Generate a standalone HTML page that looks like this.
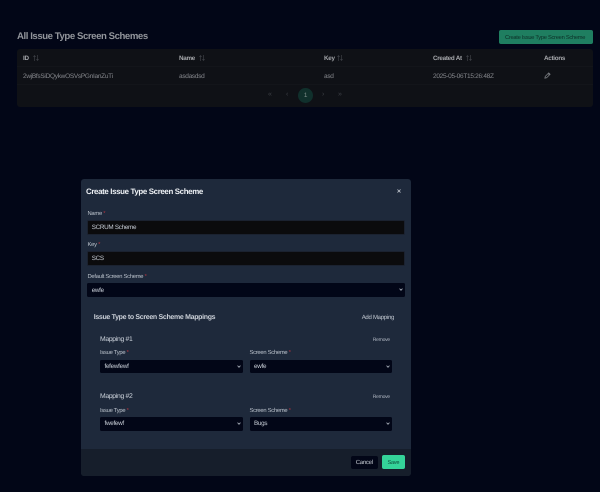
<!DOCTYPE html>
<html><head><meta charset="utf-8">
<style>
html,body{margin:0;padding:0;width:600px;height:492px;overflow:hidden;background:#020617}
body{position:relative;font-family:"Liberation Sans","Noto Sans CJK SC",sans-serif;text-rendering:geometricPrecision}
.a{position:absolute;white-space:nowrap;line-height:12px;letter-spacing:-.045em}
.b{position:absolute}
.th{font-size:6.3px;font-weight:700;color:#a6a8ac}
.td{font-size:6.5px;color:#85878c}
.so{position:absolute;top:55px}
.lb{font-size:5.8px;color:#b9c0ca}
.lb i{color:#b5343f;font-style:normal}
.inp{position:absolute;background:#0b0b0d;border:1px solid #1b2230;box-sizing:border-box;border-radius:1.5px}
.sel{position:absolute;background:#020617;box-sizing:border-box;border-radius:1.5px}
.sel svg{position:absolute;right:2px;top:5px}
.v{font-size:6.3px;color:#c8ced7}
.m{font-size:6.8px;color:#cdd3dc}
.r{font-size:5px;color:#aeb5c0}
.pg{font-size:7px;color:#3d4046}
</style></head><body>

<div class="a" style="left:17px;top:30.7px;font-size:9.6px;font-weight:700;color:#92959b">All Issue Type Screen Schemes</div>
<div class="b" style="left:499px;top:30px;width:94px;height:13.5px;background:#1f7e60;border-radius:2px"></div>
<div class="a" style="left:505px;top:31.5px;font-size:5.7px;color:#0c2f27">Create Issue Type Screen Scheme</div>

<div class="b" style="left:17px;top:49px;width:576px;height:57.5px;background:#0f1116;border-radius:3px"></div>
<div class="b" style="left:17px;top:66px;width:576px;height:1px;background:#13151a"></div>
<div class="b" style="left:17px;top:84px;width:576px;height:1px;background:#13151a"></div>

<div class="a th" style="left:23px;top:52.5px">ID</div>
<svg class="so" style="left:33px" width="6" height="6" viewBox="0 0 6 6" fill="none" stroke="#45484e" stroke-width=".6"><path d="M1.5 6V.6M.4 1.8 1.5.6 2.6 1.8M4.5 0V5.4M3.4 4.2 4.5 5.4 5.6 4.2"/></svg>
<div class="a th" style="left:179px;top:52.5px">Name</div>
<svg class="so" style="left:199px" width="6" height="6" viewBox="0 0 6 6" fill="none" stroke="#45484e" stroke-width=".6"><path d="M1.5 6V.6M.4 1.8 1.5.6 2.6 1.8M4.5 0V5.4M3.4 4.2 4.5 5.4 5.6 4.2"/></svg>
<div class="a th" style="left:324px;top:52.5px">Key</div>
<svg class="so" style="left:337px" width="6" height="6" viewBox="0 0 6 6" fill="none" stroke="#45484e" stroke-width=".6"><path d="M1.5 6V.6M.4 1.8 1.5.6 2.6 1.8M4.5 0V5.4M3.4 4.2 4.5 5.4 5.6 4.2"/></svg>
<div class="a th" style="left:433px;top:52.5px">Created At</div>
<svg class="so" style="left:466px" width="6" height="6" viewBox="0 0 6 6" fill="none" stroke="#45484e" stroke-width=".6"><path d="M1.5 6V.6M.4 1.8 1.5.6 2.6 1.8M4.5 0V5.4M3.4 4.2 4.5 5.4 5.6 4.2"/></svg>
<div class="a th" style="left:544px;top:52.5px">Actions</div>

<div class="a td" style="left:23px;top:70.5px">2wjBfsSiDQykwOSVsPGnIanZuTi</div>
<div class="a td" style="left:179px;top:70.5px">asdasdsd</div>
<div class="a td" style="left:324px;top:70.5px">asd</div>
<div class="a td" style="left:433px;top:70.5px">2025-05-06T15:26:48Z</div>
<svg class="b" style="left:544px;top:72px" width="7" height="7" viewBox="0 0 8 8" fill="none" stroke="#85888d" stroke-width=".8"><path d="M1 7 L1.4 5 L5.4 1 L7 2.6 L3 6.6 Z M4.7 1.8 L6.2 3.3"/></svg>

<div class="a pg" style="left:268px;top:89px">«</div>
<div class="a pg" style="left:286px;top:89px">‹</div>
<div class="b" style="left:298px;top:88px;width:15px;height:15px;border-radius:50%;background:#10302c"></div>
<div class="a" style="left:298px;width:15px;text-align:center;top:89.5px;font-size:6.4px;color:#80908c">1</div>
<div class="a pg" style="left:322px;top:89px">›</div>
<div class="a pg" style="left:338px;top:89px">»</div>

<!-- modal -->
<div class="b" style="left:81px;top:179px;width:330px;height:297px;background:#1e293b;border-radius:3px;overflow:hidden">
  <div class="b" style="left:0;top:270px;width:330px;height:27px;background:#161e2b"></div>
</div>
<div class="a" style="left:86px;top:185.7px;font-size:7.9px;font-weight:700;color:#eef1f5">Create Issue Type Screen Scheme</div>
<svg class="b" style="left:396.5px;top:189px" width="4" height="4" viewBox="0 0 5 5" stroke="#c5cad2" stroke-width="1"><path d="M.6 .6 L4.4 4.4 M4.4 .6 L.6 4.4"/></svg>

<div class="a lb" style="left:87.5px;top:207.8px">Name <i>*</i></div>
<div class="inp" style="left:87px;top:219.5px;width:318px;height:15px"></div>
<div class="a v" style="left:91.7px;top:221.5px">SCRUM Scheme</div>
<div class="a lb" style="left:87.5px;top:239.3px">Key <i>*</i></div>
<div class="inp" style="left:87px;top:251px;width:318px;height:15px"></div>
<div class="a v" style="left:91.7px;top:253.3px">SCS</div>
<div class="a lb" style="left:87.5px;top:270.8px">Default Screen Scheme <i>*</i></div>
<div class="sel" style="left:87px;top:283px;width:318px;height:13.5px"><svg width="4" height="3.2" viewBox="0 0 5 4" fill="none" stroke="#b5bcc6" stroke-width="1"><path d="M.7 .8 L2.5 2.8 L4.3 .8"/></svg></div>
<div class="a v" style="left:91.7px;top:284.5px">ewfe</div>

<div class="a" style="left:93.7px;top:311.5px;font-size:7px;font-weight:700;color:#c9ced6">Issue Type to Screen Scheme Mappings</div>
<div class="a" style="left:361.7px;top:311.5px;font-size:6px;color:#c3c9d2">Add Mapping</div>

<div class="a m" style="left:100px;top:333.5px">Mapping #1</div>
<div class="a r" style="left:372.7px;top:333.5px">Remove</div>
<div class="a lb" style="left:100px;top:347.2px">Issue Type <i>*</i></div>
<div class="a lb" style="left:249.5px;top:347.2px">Screen Scheme <i>*</i></div>
<div class="sel" style="left:100px;top:359.5px;width:143px;height:13.5px"><svg width="4" height="3.2" viewBox="0 0 5 4" fill="none" stroke="#b5bcc6" stroke-width="1"><path d="M.7 .8 L2.5 2.8 L4.3 .8"/></svg></div>
<div class="a v" style="left:104.5px;top:360.5px">fefewfewf</div>
<div class="sel" style="left:249.5px;top:359.5px;width:142.5px;height:13.5px"><svg width="4" height="3.2" viewBox="0 0 5 4" fill="none" stroke="#b5bcc6" stroke-width="1"><path d="M.7 .8 L2.5 2.8 L4.3 .8"/></svg></div>
<div class="a v" style="left:254px;top:360.5px">ewfe</div>

<div class="a m" style="left:100px;top:390.5px">Mapping #2</div>
<div class="a r" style="left:372.7px;top:390.5px">Remove</div>
<div class="a lb" style="left:100px;top:404.6px">Issue Type <i>*</i></div>
<div class="a lb" style="left:249.5px;top:404.6px">Screen Scheme <i>*</i></div>
<div class="sel" style="left:100px;top:417px;width:143px;height:13.5px"><svg width="4" height="3.2" viewBox="0 0 5 4" fill="none" stroke="#b5bcc6" stroke-width="1"><path d="M.7 .8 L2.5 2.8 L4.3 .8"/></svg></div>
<div class="a v" style="left:104.5px;top:418px">fwefewf</div>
<div class="sel" style="left:249.5px;top:417px;width:142.5px;height:13.5px"><svg width="4" height="3.2" viewBox="0 0 5 4" fill="none" stroke="#b5bcc6" stroke-width="1"><path d="M.7 .8 L2.5 2.8 L4.3 .8"/></svg></div>
<div class="a v" style="left:254px;top:418px">Bugs</div>

<div class="b" style="left:350.5px;top:455.5px;width:27.5px;height:13.5px;background:#020617;border-radius:2px"></div>
<div class="a" style="left:350.5px;width:27.5px;text-align:center;top:456.5px;font-size:6px;color:#c5cad2">Cancel</div>
<div class="b" style="left:381.7px;top:455px;width:23.3px;height:14px;background:#34d399;border-radius:2px"></div>
<div class="a" style="left:381.7px;width:23.3px;text-align:center;top:456.5px;font-size:5.6px;color:#0d4a3a">Save</div>

</body></html>
